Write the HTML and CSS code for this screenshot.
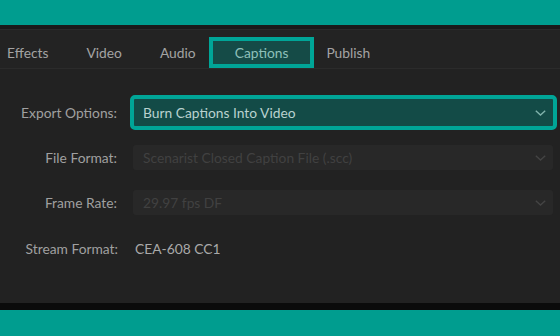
FILE: index.html
```html
<!DOCTYPE html>
<html lang="en">
<head>
<meta charset="utf-8">
<link rel="stylesheet" href="styles.css">
</head>
<body>
<div class="frame">
  <div class="top-band"></div>
  <div class="tabs-area">
    <nav class="tabs">
      <span class="tab first">Effects</span>
      <span class="tab">Video</span>
      <span class="tab">Audio</span>
      <span class="tab active">Captions</span>
      <span class="tab">Publish</span>
    </nav>
  </div>
  <div class="panel">
    <div class="form">
      <label class="label">Export Options:</label>
      <div class="select focused">
        <span class="select-text">Burn Captions Into Video</span>
        <svg class="chev" width="11" height="6" viewBox="0 0 11 6"><path d="M0.8 0.8 L5.5 5 L10.2 0.8" fill="none" stroke="currentColor" stroke-width="1.4"/></svg>
      </div>

      <label class="label">File Format:</label>
      <div class="select disabled">
        <span class="select-text">Scenarist Closed Caption File (.scc)</span>
        <svg class="chev" width="11" height="6" viewBox="0 0 11 6"><path d="M0.8 0.8 L5.5 5 L10.2 0.8" fill="none" stroke="currentColor" stroke-width="1.4"/></svg>
      </div>

      <label class="label">Frame Rate:</label>
      <div class="select disabled">
        <span class="select-text">29.97 fps DF</span>
        <svg class="chev" width="11" height="6" viewBox="0 0 11 6"><path d="M0.8 0.8 L5.5 5 L10.2 0.8" fill="none" stroke="currentColor" stroke-width="1.4"/></svg>
      </div>

      <label class="label stream">Stream Format:</label>
      <div class="value">CEA-608 CC1</div>
    </div>
  </div>
  <div class="bottom-black"></div>
  <div class="bottom-band"></div>
</div>
</body>
</html>
```

FILE: styles.css
```css
* { box-sizing: border-box; }
html, body { margin: 0; padding: 0; }
body {
  width: 560px;
  height: 336px;
  overflow: hidden;
  background: #222222;
  font-family: "Lato", "Open Sans", sans-serif;
  font-size: 13.8px;
}
.frame {
  display: flex;
  flex-direction: column;
  height: 336px;
}
.top-band {
  height: 25px;
  background: #009d8f;
  flex: none;
}
.tabs-area {
  flex: none;
  height: 44px;
  background: #232323;
  border-top: 4px solid #1a1a1a;
  border-bottom: 1px solid #2b2b2b;
  box-shadow: inset 0 1px 0 #2a2a2a;
  display: flex;
  align-items: flex-end;
}
.tabs {
  display: flex;
  align-items: center;
  height: 31px;
}
.tab {
  color: #a3a3a3;
  padding: 0 19px;
  line-height: 31px;
  white-space: nowrap;
}
.tab.first { margin-left: -12px; }
.tab.active {
  border: 4px solid #00a597;
  background: #154b47;
  color: #8ec0ba;
  padding: 0 22px;
  line-height: 23px;
  height: 31px;
  margin: 0 -7px 0 -6px;
}
.panel {
  flex: 1;
  background: #222222;
  padding-top: 31px;
}
.form {
  display: grid;
  grid-template-columns: 117px 420px;
  grid-auto-rows: 25px;
  column-gap: 16px;
  row-gap: 20px;
}
.label {
  color: #a0a0a0;
  text-align: right;
  align-self: center;
  white-space: nowrap;
}
.label.stream { margin-right: -1px; padding-top: 2px; }
.select {
  display: flex;
  align-items: center;
  justify-content: space-between;
  padding: 0 7px 0 10px;
  border-radius: 3px;
}
.select.focused {
  height: 35px;
  margin: -5px -4px -5px -3px;
  border: 4px solid #00a597;
  border-radius: 5px;
  background: #134b47;
  padding: 0 7px 0 9px;
  color: #b9d2cf;
}
.select.focused .chev { color: #7fb2ab; }
.select.disabled {
  background: #282828;
  color: #414141;
}
.select.disabled .chev { color: #444444; }
.select-text { white-space: nowrap; }
.value {
  color: #a9a9a9;
  align-self: center;
  margin-left: 2px;
  padding-top: 2px;
}
.bottom-black {
  flex: none;
  height: 7px;
  background: #0b0b0b;
}
.bottom-band {
  flex: none;
  height: 26px;
  background: #009d8f;
}
```
